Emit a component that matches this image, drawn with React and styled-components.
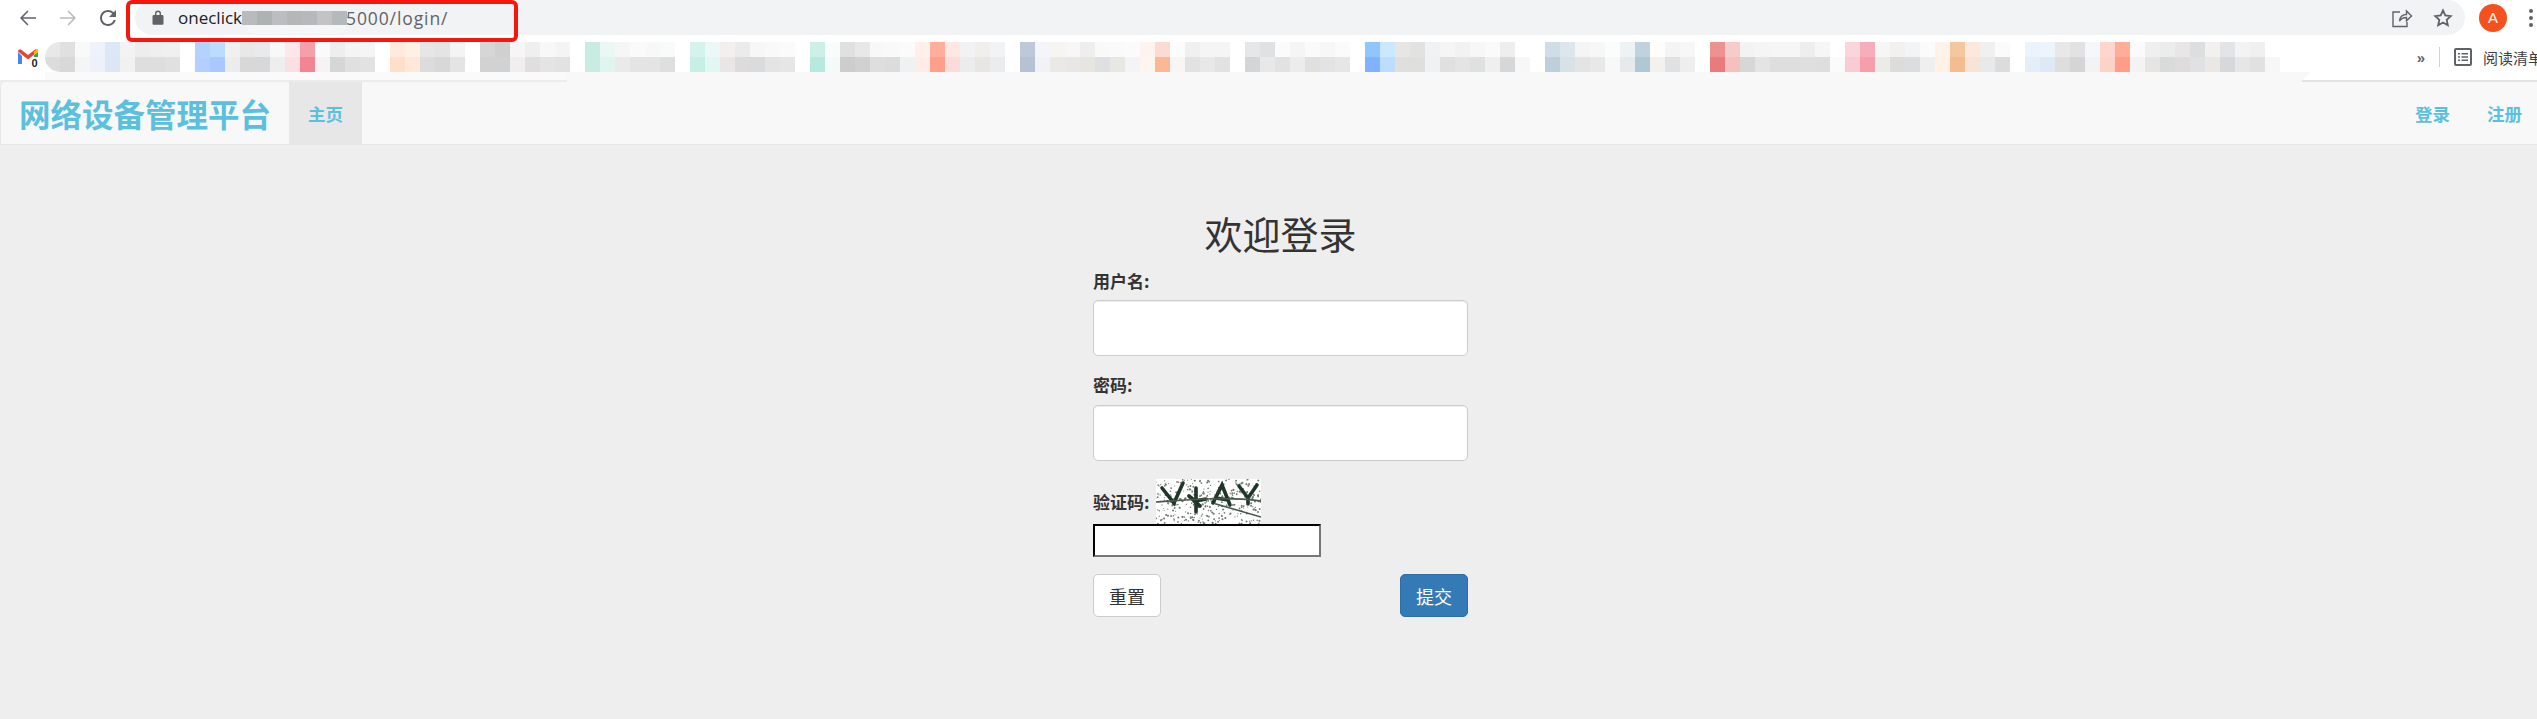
import React from 'react';
import styled, { createGlobalStyle } from 'styled-components';

const GlobalStyle = createGlobalStyle`
  html, body {
    margin: 0;
    padding: 0;
    background: #eeeeee;
    overflow: hidden;
  }
  * { box-sizing: border-box; }
`;

const cjk = `"Noto Sans CJK SC", "Noto Sans", sans-serif`;
const W = 'ffffff ffffff';

// blurred-out bookmarks, one entry per 15px column: top colour, bottom colour
const bookmarkColumns = [
  'e8e8e8 dcdcdc', 'e0e0e0 d8d8d8', 'f8f9f9 f4f5f6', 'eef3fb edf1fa', 'dce8f8 dce7f6', 'f3f3f3 f1f1f1', 'ededed dedede', 'efefef dedede', 'f0f0f0 e0e0e0', W,
  'b4d2fe b4ceff', 'bcdcfe a8c8ff', 'f0f0f0 ececec', 'e8e8e8 d8d8d8', 'e8eaec d8d8da', 'f8f8f8 eeeeee', 'fce8ea fbe0e3', 'f59fab f38593', 'fafafa f8f3f3', 'eeeeee d4d6d8',
  'f4f4f4 e0e0e0', 'f5f5f5 e2e2e2', W, 'ffeadd ffdfc9', 'fff0e5 ffe8da', 'e6e6e6 dcdcdc', 'e4e4e4 d8d8d8', 'f4f4f4 e4e4e4', W, 'd6d6d6 d2d2d2',
  'd0d0d0 d0d2d4', 'f6f6f6 f0eeee', 'efefef e0dedf', 'f8f8f8 e4e4e4', 'f4f4f4 e2e2e4', W, 'c8ece2 c8ece2', 'ecf6f3 e0f5ef', 'f6f6f6 eaeaea', 'fafafa e4e4e4',
  'f8f8f8 e4e4e4', 'f9fbfa dfdfdf', W, 'd4f3ec c6f0e6', 'ecf8f5 e2f7f1', 'f3efef e8e6e6', 'ebebeb dddbdc', 'f7f7f7 dadbdd', 'f9f9f9 e4e4e4', 'fbfbfb e6e6e6',
  W, 'ceefe7 b8e9e1', 'f8fcfb f2fbf9', 'e0e0e0 cdcdcd', 'e8e8e8 d2d0d1', 'f8f8f8 dededc', 'f9f9f9 dcdcdc', 'fbfbfb eff2f2', 'fff0ec ffece7', 'ffae9c ff9f89',
  'ffe8e2 fcdcd8', 'f2f2f4 ececec', 'f1efeb e8e6e3', 'f2f3f5 ebecee', W, 'bdc9d9 b5c2d3', 'f3f5f9 f0f2f6', 'f6f5f2 ebe8e8', 'f7f7f7 e8e7e6', 'eeeeee e6e5e0',
  'f9f9f9 dfe0e2', 'fafafa e8e7e4', 'fbfbfb f3f4f5', 'fff3ef fff5ef', 'fbdbd2 fbb895', 'fcfcfc f8f6f4', 'f0f0f0 e2e2e2', 'f5f5f5 e8e8e8', 'f5f5f5 e2e2e2', W,
  'e6e7e9 d4d5d7', 'e0e1e3 e8e8e8', 'fbfbfb e2e2e2', 'f5f5f5 ebeded', 'fafafa e0e0de', 'f7f7f7 e3e3e5', 'fbfbfb e6e6e6', W, '90c6ff 80b2ff', 'cce8ff bedcfd',
  'e8e6e4 e0dfdd', 'e2e2e2 dfdfdd', 'f1f2f4 f0f1f2', 'f5f5f5 e0e0e0', 'f2f2f2 e4e4e4', 'f7f7f7 dfe1e0', 'fafafa efefef', 'eeeeee d6d7d9', 'ffffff f7f7f7', W,
  'cfdde6 bdcfd9', 'dde5ed d8e0e8', 'f5f5f5 e4e4e4', 'f7f7f7 e8e8e6', 'fbfcfc f7f8fa', 'edf2f4 e6eaed', 'c0d2dd b0c7d4', 'fdfdfb f3f1ef', 'f4f4f4 e0e1e2', 'f6f7f6 eeeeee',
  W, 'ee9191 e97b7b', 'f6cccb f4c1bf', 'f3f3f3 d7d7d7', 'f5f5f5 e4e4e4', 'f6f6f6 dedede', 'f6f6f6 dedede', 'eeeeee dfdfdf', 'f6f6f6 dedede', 'ffffff fbfbfb',
  'fad5dc f9ccd3', 'f7aeba f49faa', 'f6f6f6 ebebe8', 'f2f1ef dcdcda', 'f3f4f6 dcdde1', 'fbfbfb efefef', 'fff2e8 fff1e6', 'f5c79e f4bd90', 'fbe9db f8e4d4', 'f0f0f0 e8e9ea',
  'fbfbfb dcdcdc', W, 'ebf3fb e4eef8', 'eef4fb dde9f6', 'e8e8e8 dedede', 'e2e2e2 d6d4d5', 'f6f7f8 f2f3f4', 'ffd6ce ffd2c8', 'ffad9b ff9d89', 'fbfbfb f3f3f3',
  'efefef e6e5e3', 'ececec d9dbda', 'e8e6e6 dfdcdb', 'dcdee0 dfe1e4', 'f3f1ef ebe7e5', 'e2e4e7 d6d8da', 'f3f3f3 e4e6e8', 'f1f0f0 e2e0e0', 'ffffff f7f7f7',
];

const addressBlur = ['b8babb', 'adb2b2', 'bbbdc0', 'b5b6b6', 'b5b9bc', 'c4c3c3', 'b4b9bb'];

// fixed noise for the captcha picture
const noise = n => {
  const v = Math.sin(n * 12.9898) * 43758.5453;
  return v - Math.floor(v);
};

const captchaDots = Array.from({ length: 320 }, (_, i) => ({
  x: noise(i + 1) * 105,
  y: noise(i + 500) * 45,
  r: 0.5 + noise(i + 900) * 0.6,
}));

const Toolbar = styled.div`
  display: flex;
  align-items: center;
  height: 35px;
  padding-left: 16px;
  background: #ffffff;
`;

const NavIcon = styled.svg`
  width: 24px;
  height: 24px;
  margin-right: 16px;
  fill: ${p => (p.$disabled ? '#b9bbbd' : '#5f6368')};
  transform: ${p => (p.$flip ? 'scaleX(-1)' : 'none')};
`;

const Omnibox = styled.div`
  display: flex;
  align-items: center;
  width: 2330px;
  height: 35px;
  margin-left: -1px;
  padding-left: 17px;
  border-radius: 18px;
  background: #f1f3f4;
`;

const Address = styled.div`
  display: flex;
  align-items: center;
  margin-left: 14px;
  font: 400 17px "Open Sans", sans-serif;
  color: #202124;
`;

const AddressRest = styled.span`
  color: #5f6368;
  font-size: 17.5px;
  letter-spacing: 0.9px;
`;

const AddressMask = styled.div`
  position: relative;
  display: flex;
  flex: none;
  width: 105px;
  height: 14px;
  margin: 0 -1px 0 0;

  &::after {
    content: '';
    position: absolute;
    left: 4px;
    right: 0;
    top: 14px;
    height: 9px;
    border-radius: 0 0 40px 40px;
    background: #f5f6f7;
  }
`;

const MaskCell = styled.div`
  flex: 1;
  background: #${p => p.$color};
`;

const OmniActions = styled.div`
  display: flex;
  align-items: center;
  gap: 20px;
  margin-left: auto;
  padding-right: 12px;
`;

const Avatar = styled.div`
  display: flex;
  align-items: center;
  justify-content: center;
  width: 28px;
  height: 28px;
  margin-left: 14px;
  border-radius: 50%;
  background: #f4511e;
  color: #ffffff;
  font: 400 15px "Liberation Sans", sans-serif;
`;

const MoreDots = styled.div`
  display: flex;
  flex-direction: column;
  gap: 3px;
  margin-left: 22px;
`;

const Dot = styled.span`
  width: 4px;
  height: 4px;
  border-radius: 50%;
  background: #5f6368;
`;

const Highlight = styled.div`
  position: absolute;
  z-index: 2;
  left: 126px;
  top: 0;
  width: 392px;
  height: 42px;
  border: 4px solid #f5160d;
  border-radius: 6px;
`;

const BookmarkBar = styled.div`
  position: relative;
  display: flex;
  align-items: flex-start;
  height: 47px;
  padding: 7px 0 0 18px;
  background: #ffffff;
  border-bottom: 2px solid #e2e2e2;
`;

const GmailIcon = styled.svg`
  width: 22px;
  height: 20px;
  margin: 7px 5px 0 0;
  flex: none;
`;

const SwatchStrip = styled.div`
  display: flex;
  flex: none;
  overflow: hidden;
  border-radius: 15px 0 0 15px;
`;

const Swatch = styled.div`
  width: 15px;
  height: 30px;
  background: linear-gradient(#${p => p.$top} 50%, #${p => p.$bottom} 50%);
`;

const BarRight = styled.div`
  display: flex;
  align-items: center;
  height: 26px;
  margin: 2px 0 0 auto;
  color: #5f6368;
  overflow: hidden;
  width: 125px;
`;

const Chevrons = styled.span`
  flex: none;
  width: 18px;
  font: 700 15px "Liberation Sans", sans-serif;
  text-align: center;
`;

const BarDivider = styled.span`
  flex: none;
  width: 1px;
  height: 20px;
  margin: 0 14px 0 9px;
  background: #d0d0d0;
`;

const ReadIcon = styled.svg`
  width: 18px;
  height: 18px;
  flex: none;
  margin-right: 11px;
`;

const ReadText = styled.span`
  flex: none;
  font: 400 15px ${cjk};
  color: #3c4043;
`;

const BlurFade = styled.div`
  position: absolute;
  left: ${p => p.$left}px;
  top: ${p => p.$top}px;
  width: ${p => p.$width}px;
  height: ${p => p.$height}px;
  background: ${p => p.$color};
`;

const SlantPatch = styled.div`
  position: absolute;
  left: 567px;
  top: 37px;
  width: 1744px;
  height: 10px;
  background: #f8f8f8;
  clip-path: polygon(0 0, 100% 0, calc(100% - 10px) 100%, 0 100%);
`;

const Navbar = styled.nav`
  display: flex;
  height: 63px;
  background: #f8f8f8;
  border: 1px solid #e7e7e7;
  border-width: 0 0 1px 1px;
  border-top-left-radius: 5px;
`;

const Brand = styled.a`
  display: flex;
  align-items: center;
  width: 288px;
  padding-left: 18px;
  font: 700 31.5px ${cjk};
  color: #5bc0de;
`;

const NavLink = styled.a`
  display: flex;
  align-items: center;
  padding: 0 ${p => p.$pad || 0}px;
  background: ${p => (p.$active ? '#e7e7e7' : 'transparent')};
  font: 700 17.5px ${cjk};
  color: #5bc0de;
`;

const NavRight = styled.div`
  display: flex;
  gap: 37px;
  margin-left: auto;
  padding-right: 15px;
`;

const Main = styled.main`
  display: flex;
  justify-content: center;
  padding: 67px 0 0 24px;
`;

const LoginForm = styled.form`
  display: flex;
  flex-direction: column;
  width: 375px;
  margin: 0;
`;

const Title = styled.h2`
  margin: 0 0 16px;
  text-align: center;
  font: 400 38px/41px ${cjk};
  color: #333333;
`;

const Label = styled.label`
  display: block;
  margin-bottom: ${p => p.$gap}px;
  font: 700 17px/24px ${cjk};
  color: #333333;
`;

const Input = styled.input`
  display: block;
  width: 100%;
  height: 56px;
  margin-bottom: 17px;
  border: 1.5px solid #cccccc;
  border-radius: 5px;
  background: #ffffff;
  box-shadow: inset 0 1px 1px rgba(0, 0, 0, 0.075);
`;

const CaptchaRow = styled.div`
  display: flex;
  align-items: center;
  gap: 6px;
  height: 45px;
  margin-top: 1px;
`;

const CaptchaImage = styled.svg`
  width: 105px;
  height: 45px;
  background: #ffffff;
  filter: blur(0.5px);
`;

const CaptchaInput = styled.input`
  display: block;
  width: 228px;
  height: 33px;
  background: #ffffff;
  border: 2px inset #767676;
  border-color: #1f1f1f #767676 #767676 #1f1f1f;
`;

const ButtonRow = styled.div`
  display: flex;
  justify-content: space-between;
  margin-top: 17px;
`;

const Button = styled.button`
  width: 68px;
  height: 43px;
  padding: 0;
  border: 1.5px solid ${p => (p.$primary ? '#2e6da4' : '#cccccc')};
  border-radius: 5px;
  background: ${p => (p.$primary ? '#337ab7' : '#ffffff')};
  color: ${p => (p.$primary ? '#ffffff' : '#333333')};
  font: 400 18px ${cjk};
`;

const App = () => {
  return (
    <>
      <GlobalStyle />
      <Toolbar>
        <NavIcon viewBox="0 0 24 24"><path d="M20 11.2H6.9l5.6-5.6L11.4 4.5 4 12l7.4 7.5 1.1-1.1-5.6-5.6H20z" /></NavIcon>
        <NavIcon viewBox="0 0 24 24" $disabled $flip><path d="M20 11.2H6.9l5.6-5.6L11.4 4.5 4 12l7.4 7.5 1.1-1.1-5.6-5.6H20z" /></NavIcon>
        <NavIcon viewBox="0 0 24 24"><path d="M17.65 6.35A7.958 7.958 0 0012 4c-4.42 0-7.99 3.58-7.99 8s3.57 8 7.99 8c3.73 0 6.84-2.55 7.73-6h-2.08A5.99 5.99 0 0112 18c-3.31 0-6-2.69-6-6s2.69-6 6-6c1.66 0 3.14.69 4.22 1.78L13 11h7V4l-2.35 2.35z" /></NavIcon>
        <Omnibox>
          <svg width="12" height="15" viewBox="0 0 12 15">
            <path fill="#5f6368" d="M3 5V3.6a3 3 0 016 0V5h1.2c.7 0 1.3.6 1.3 1.3v7.2c0 .7-.6 1.3-1.3 1.3H1.8C1.100 14.800.5 14.200.5 13.500V6.300C.5 5.600 1.100 5 1.800 5zM4.400 5h3.200V3.600a1.600 1.600 0 00-3.200 0z" />
          </svg>
          <Address>
            <span>oneclick</span>
            <AddressMask>
              {addressBlur.map((color, i) => <MaskCell $color={color} key={i} />)}
            </AddressMask>
            <AddressRest>5000/login/</AddressRest>
          </Address>
          <OmniActions>
            <svg width="22" height="22" viewBox="0 0 22 22" fill="none" stroke="#5f6368" strokeWidth="1.400">
              <path d="M9 5H2v14.500h14V15" />
              <path d="M8.500 14c.5-4 3.300-6.500 7-6.500V4l5 5-5 4.800V10.500c-3 0-5.200 1-7 3.500z" />
            </svg>
            <svg width="20" height="20" viewBox="0 0 20 20" fill="none" stroke="#5f6368" strokeWidth="1.800">
              <path d="M10 2.500l2.300 5 5.400.6-4 3.700 1.100 5.400L10 14.500l-4.800 2.700 1.100-5.400-4-3.700 5.400-.6z" />
            </svg>
          </OmniActions>
        </Omnibox>
        <Avatar>A</Avatar>
        <MoreDots><Dot /><Dot /><Dot /></MoreDots>
      </Toolbar>
      <Highlight />
      <BookmarkBar>
        <GmailIcon viewBox="0 0 22 20">
          <path fill="#4285f4" d="M0 3v12h4V7z" />
          <path fill="#ea4335" d="M0 2.500C0 .5 2 0 3.500 1L10 6l6.500-5C18 0 20 .5 20 2.500L10 10.500z" />
          <path fill="#34a853" d="M16 6v6h4V3z" />
          <path fill="#fbbc04" d="M16 2.500L20 0v3l-4 3z" />
          <rect x="12" y="8" width="10" height="12" rx="2" fill="#ffffff" />
          <text x="13.500" y="18" fontSize="11" fontWeight="700" fontFamily="Liberation Sans, sans-serif" fill="#222222">0</text>
        </GmailIcon>
        <SwatchStrip>
          {bookmarkColumns.map((col, i) => {
            const [top, bottom] = col.split(' ');
            return <Swatch $top={top} $bottom={bottom} key={i} />;
          })}
        </SwatchStrip>
        <BarRight>
          <Chevrons>»</Chevrons>
          <BarDivider />
          <ReadIcon viewBox="0 0 18 18">
            <rect x="1" y="1" width="16" height="16" rx="1" fill="none" stroke="#5f6368" strokeWidth="2" />
            <path fill="#5f6368" d="M4 5h2v1.500H4zM7.500 5H14v1.500H7.500zM4 8.200h2v1.500H4zM7.500 8.200H14v1.500H7.500zM4 11.500h2V13H4zM7.500 11.500H14V13H7.500z" />
          </ReadIcon>
          <ReadText>阅读清单</ReadText>
        </BarRight>
        <BlurFade $left={45} $top={37} $width={522} $height={8} $color="#fafafa" />
        <BlurFade $left={0} $top={45} $width={567} $height={2} $color="#ececec" />
        <SlantPatch />
      </BookmarkBar>
      <Navbar>
        <Brand>网络设备管理平台</Brand>
        <NavLink $active $pad={19}>主页</NavLink>
        <NavRight>
          <NavLink>登录</NavLink>
          <NavLink>注册</NavLink>
        </NavRight>
      </Navbar>
      <Main>
        <LoginForm>
          <Title>欢迎登录</Title>
          <Label $gap={7}>用户名:</Label>
          <Input type="text" />
          <Label $gap={8}>密码:</Label>
          <Input type="password" />
          <CaptchaRow>
            <Label $gap={0}>验证码:</Label>
            <CaptchaImage viewBox="0 0 105 45">
              {captchaDots.map((d, i) => <circle cx={d.x} cy={d.y} r={d.r} fill="#6f7871" key={i} />)}
              <g fill="none" stroke="#1f3628" strokeWidth="3.600" strokeLinecap="round">
                <path d="M6 9l12 15 9-20" />
                <path d="M33 17l6 5 11-2M40 9v24M38 22l6 5" />
                <path d="M57 24l9-18 8 20M60 19l12 2" />
                <path d="M83 7l9 12 9-13M92 19v6" />
              </g>
              <g fill="none" stroke="#46594d" strokeWidth="1.600">
                <path d="M0 23c30-2 70-6 105-1" />
                <path d="M60 25l45 13" />
              </g>
            </CaptchaImage>
          </CaptchaRow>
          <CaptchaInput type="text" />
          <ButtonRow>
            <Button type="reset">重置</Button>
            <Button type="submit" $primary>提交</Button>
          </ButtonRow>
        </LoginForm>
      </Main>
    </>
  );
};

export default App;
